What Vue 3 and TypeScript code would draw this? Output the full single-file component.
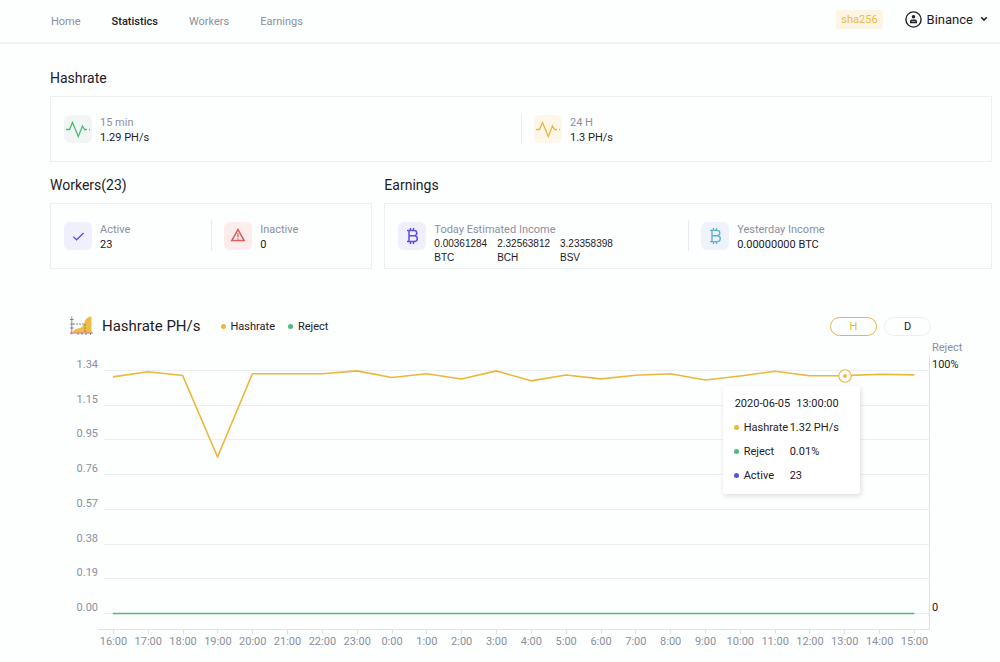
<script setup lang="ts">
import { computed, ref } from 'vue'

const navItems = ['Home', 'Statistics', 'Workers', 'Earnings']
const active = 'Statistics'
const range = ref<'H' | 'D'>('H')
const ranges = ['H', 'D'] as const

const income = [
  { value: '0.00361284', coin: 'BTC' },
  { value: '2.32563812', coin: 'BCH' },
  { value: '3.23358398', coin: 'BSV' },
]

const yLabels = ['1.34', '1.15', '0.95', '0.76', '0.57', '0.38', '0.19', '0.00']
const xLabels = Array.from({ length: 24 }, (_, i) => `${(i + 16) % 24}:00`)
const series = [
  1.305, 1.333, 1.312, 0.863, 1.322, 1.322, 1.322, 1.338, 1.301, 1.322, 1.293, 1.338,
  1.283, 1.315, 1.294, 1.314, 1.322, 1.288, 1.31, 1.336, 1.311, 1.312, 1.319, 1.316,
]

const W = 831
const H = 275
const TOP = 15
const BASE = 258
const px = (i: number) => 15 + i * 34.8
const py = (v: number) => BASE + 0.5 - (v / 1.34) * (BASE - TOP)

const gridLines = yLabels.map((_, i) => Math.round(TOP + (i * (BASE - TOP)) / 7))
const points = computed(() => series.map((v, i) => `${px(i)},${py(v)}`).join(' '))

const selected = ref(21)
const anchor = computed(() => ({
  left: `${(px(selected.value) / W) * 100}%`,
  top: `${(py(series[selected.value]) / H) * 100}%`,
}))
const details = [
  { name: 'Hashrate', value: '1.32 PH/s', tone: 'gold' },
  { name: 'Reject', value: '0.01%', tone: 'green' },
  { name: 'Active', value: '23', tone: 'violet' },
]
</script>

<template>
  <div class="page">
    <header class="topbar">
      <nav class="nav">
        <a v-for="n in navItems" :key="n" href="#" :class="{ current: n === active }">{{ n }}</a>
      </nav>
      <span class="algo">sha256</span>
      <button type="button" class="account">
        <svg width="17" height="17" viewBox="0 0 17 17" aria-hidden="true">
          <circle cx="8.5" cy="8.5" r="7.6" fill="none" stroke="#1e2026" stroke-width="1.4" />
          <circle cx="8.5" cy="5.8" r="1.8" fill="#1e2026" />
          <path d="M5 12.2V10.4Q5 8.6 6.8 8.6H10.2Q12 8.6 12 10.4V12.2Z" fill="#1e2026" />
          <path d="M6.6 10.4H10.4" stroke="#fff" stroke-width=".6" />
        </svg>
        <span>Binance</span>
        <svg class="chev" width="8" height="6" viewBox="0 0 8 6" aria-hidden="true">
          <path d="M1.2 1.2L4 4L6.8 1.2" fill="none" stroke="#1e2026" stroke-width="1.6" />
        </svg>
      </button>
    </header>

    <main>
      <section>
        <h2>Hashrate</h2>
        <div class="card">
          <div class="cell">
            <span class="tile mint">
              <svg width="28" height="28" viewBox="0 0 28 28" aria-hidden="true">
                <path d="M2 14.5H5.5L8.5 7.5L14.3 21.5L18.5 11L20.5 14.5H23M25 14.5H26" fill="none" stroke="#4bbd7a" stroke-width="1.3" />
              </svg>
            </span>
            <div><div class="label">15 min</div><div class="value">1.29 PH/s</div></div>
          </div>
          <div class="cell">
            <span class="tile cream">
              <svg width="28" height="28" viewBox="0 0 28 28" aria-hidden="true">
                <path d="M2 14.5H5.5L8.5 7.5L14.3 21.5L18.5 11L20.5 14.5H23M25 14.5H26" fill="none" stroke="#eab83a" stroke-width="1.3" />
              </svg>
            </span>
            <div><div class="label">24 H</div><div class="value">1.3 PH/s</div></div>
          </div>
        </div>
      </section>

      <div class="pair">
        <section>
          <h2>Workers(23)</h2>
          <div class="card">
            <div class="cell">
              <span class="tile lilac">
                <svg width="28" height="28" viewBox="0 0 28 28" aria-hidden="true">
                  <path d="M9.2 14.6L12.6 17.8L19.6 11" fill="none" stroke="#5a50e6" stroke-width="1.3" />
                </svg>
              </span>
              <div><div class="label">Active</div><div class="value">23</div></div>
            </div>
            <div class="cell">
              <span class="tile rose">
                <svg width="28" height="28" viewBox="0 0 28 28" aria-hidden="true">
                  <path d="M14 7.6L20.2 18.6H7.8Z" fill="none" stroke="#d9605a" stroke-width="1.5" />
                  <path d="M14 11.3V15.2M14 16.2V17.5" stroke="#d9605a" stroke-width="1.3" />
                </svg>
              </span>
              <div><div class="label">Inactive</div><div class="value">0</div></div>
            </div>
          </div>
        </section>

        <section>
          <h2>Earnings</h2>
          <div class="card">
            <div class="cell">
              <span class="tile lilac">
                <svg width="28" height="28" viewBox="0 0 28 28" fill="none" stroke="#5a50e6" stroke-width="1.5" aria-hidden="true">
                  <path d="M9 8.4H16.2Q18.8 8.4 18.8 11Q18.8 13.7 16.2 13.7H11M16.2 13.7Q19.3 13.7 19.3 16.6Q19.3 19.6 16.2 19.6H9M11 8.4V19.6M12.5 6V8.4M15.5 6V8.4M12.5 19.6V22M15.5 19.6V22" />
                </svg>
              </span>
              <div>
                <div class="label">Today Estimated Income</div>
                <div class="coins">
                  <div v-for="c in income" :key="c.coin">
                    <div>{{ c.value }}</div>
                    <div>{{ c.coin }}</div>
                  </div>
                </div>
              </div>
            </div>
            <div class="cell">
              <span class="tile haze">
                <svg width="28" height="28" viewBox="0 0 28 28" fill="none" stroke="#5fb4cc" stroke-width="1.4" aria-hidden="true">
                  <path d="M9 8.4H16.2Q18.8 8.4 18.8 11Q18.8 13.7 16.2 13.7H11M16.2 13.7Q19.3 13.7 19.3 16.6Q19.3 19.6 16.2 19.6H9M11 8.4V19.6M12.5 6V8.4M15.5 6V8.4M12.5 19.6V22M15.5 19.6V22" />
                </svg>
              </span>
              <div><div class="label">Yesterday Income</div><div class="value">0.00000000 BTC</div></div>
            </div>
          </div>
        </section>
      </div>

      <section class="chart">
        <div class="chart-head">
          <svg width="23" height="20" viewBox="0 0 23 20" aria-hidden="true">
            <path d="M2.5 16.5Q5 12.8 8 12.6Q12.5 12 14 8Q15.5 1 21.5 .6V16.5Z" fill="#eebc40" />
            <path d="M1.8 .5V18.5M0 3.5H3.6M0 8H3.6M0 12H3.6" fill="none" stroke="#6b6f7c" stroke-width=".8" />
            <path d="M3 8H15V16" fill="none" stroke="#6b6f7c" stroke-width=".8" stroke-dasharray="2 1" />
            <path d="M0 17H23" stroke="#d46b52" stroke-width="1" />
            <path d="M8 16.5V19M12 16.5V19M16 16.5V19M20.5 16.5V19" stroke="#6b6f7c" stroke-width=".8" />
          </svg>
          <h1>Hashrate PH/s</h1>
          <span class="key"><i class="dot gold"></i>Hashrate</span>
          <span class="key"><i class="dot green"></i>Reject</span>
          <div class="ranges">
            <button v-for="r in ranges" :key="r" type="button" :class="{ on: range === r }" @click="range = r">{{ r }}</button>
          </div>
        </div>

        <div class="plot-grid">
          <div class="axis-title">Reject</div>
          <div class="y-axis"><span v-for="y in yLabels" :key="y">{{ y }}</span></div>
          <div class="plot">
            <svg :viewBox="`0 0 ${W} ${H}`" preserveAspectRatio="none" role="img" aria-label="Hashrate and reject over 24 hours">
              <g fill="#eceff1">
                <rect v-for="g in gridLines" :key="g" x="6" :y="g" width="825" height="1" />
              </g>
              <g fill="#dfe3e5">
                <rect x="0" y="274" width="831" height="1" />
                <rect x="830" y="0" width="1" height="275" />
              </g>
              <polyline :points="`${px(0)},${BASE + 0.5} ${px(23)},${BASE + 0.5}`" fill="none" stroke="#4bbd7a" stroke-width="1.6" />
              <polyline :points="points" fill="none" stroke="#eab83a" stroke-width="1.6" stroke-linejoin="round" />
            </svg>
            <div class="anchor" :style="anchor">
              <svg class="marker" width="14" height="14" viewBox="0 0 14 14" aria-hidden="true">
                <circle cx="7" cy="7" r="6.2" fill="#fff" stroke="#eab83a" stroke-width="1.1" />
                <circle cx="7" cy="7" r="1.9" fill="#eab83a" />
              </svg>
              <div class="tip">
                <div class="when"><span>2020-06-05</span><span>13:00:00</span></div>
                <div v-for="d in details" :key="d.name" class="detail">
                  <i class="dot" :class="d.tone"></i>
                  <span class="name">{{ d.name }}</span>
                  <span>{{ d.value }}</span>
                </div>
              </div>
            </div>
          </div>
          <div class="r-axis"><span>100%</span><span>0</span></div>
          <div class="x-axis"><span v-for="x in xLabels" :key="x">{{ x }}</span></div>
        </div>
      </section>
    </main>
  </div>
</template>

<style>
body { margin: 0; background: #fdfefe; }
</style>

<style scoped>
.page {
  font-family: Roboto, "Liberation Sans", sans-serif;
  font-size: 11px;
  line-height: 15px;
  color: #1e2026;
  background: #fdfefe;
}
h1, h2 { margin: 0; font-weight: 400; }
button { font: inherit; color: inherit; background: none; cursor: pointer; }

.topbar {
  display: flex;
  align-items: center;
  height: 42px;
  padding: 0 12px 0 51px;
  border-bottom: 2px solid #eff2f3;
}
.nav { display: flex; gap: 31px; flex: 1; padding-top: 1px; }
.nav a { color: #8b909e; text-decoration: none; }
.nav .current { color: #1e2026; font-weight: 500; }
.algo {
  padding: 2px 5px;
  margin: 0 22px 4px 0;
  border-radius: 2px;
  background: #fdf5e4;
  color: #ecba45;
}
.account {
  display: flex;
  align-items: center;
  gap: 5px;
  padding: 0;
  margin-bottom: 4px;
  border: 0;
  font-size: 13px;
}
.chev { margin-left: 2px; }

main { padding: 24px 8px 0 50px; }
h2 { font-size: 14px; line-height: 20px; margin-bottom: 8px; }
.card {
  display: grid;
  grid-template-columns: 1fr 1fr;
  box-sizing: border-box;
  height: 66px;
  border: 1px solid #edf0f2;
}
.cell { display: flex; gap: 8px; padding: 18px 0 0 13px; position: relative; }
.cell + .cell::before {
  content: "";
  position: absolute;
  left: 0;
  top: 16px;
  height: 31px;
  border-left: 1px solid #e8ebed;
}
.tile { flex: none; width: 28px; height: 28px; border-radius: 6px; }
.tile svg { display: block; }
.mint { background: #f1f5f4; }
.cream { background: #fdf7ea; }
.lilac { background: #efeffd; }
.rose { background: #fcecec; }
.haze { background: #eff2fb; }
.label { color: #8b909e; white-space: nowrap; }
.value { white-space: nowrap; }
.coins {
  display: flex;
  gap: 10px;
  font-family: "Liberation Sans", Arial, sans-serif;
  font-size: 10px;
  line-height: 14px;
}
.pair { display: grid; grid-template-columns: 322fr 607fr; gap: 12px; margin-top: 13px; }

.chart { margin-top: 46px; }
.chart-head { display: flex; align-items: center; height: 22px; padding: 0 61px 0 20px; }
h1 { font-size: 15px; line-height: 22px; margin: 0 20px 0 9px; }
.key { display: flex; align-items: center; gap: 5px; margin-right: 13px; }
.dot { width: 5px; height: 5px; border-radius: 50%; flex: none; }
.gold { background: #eab83a; }
.green { background: #4bbd7a; }
.violet { background: #5a50e6; }
.ranges { display: flex; gap: 7px; margin-left: auto; }
.ranges button {
  width: 47px;
  height: 19px;
  padding: 0;
  border: 1px solid #eceff1;
  border-radius: 10px;
  line-height: 17px;
}
.ranges .on { border-color: #eab83a; color: #eab83a; }

.plot-grid {
  display: grid;
  grid-template-columns: 48px minmax(0, 1fr) 62px;
  margin-top: 4px;
}
.axis-title { grid-column: 3; padding-left: 2px; color: #8b909e; line-height: 14px; }
.y-axis, .r-axis {
  display: flex;
  flex-direction: column;
  justify-content: space-between;
  line-height: 14px;
  padding: 3px 0 15px;
}
.y-axis { grid-column: 1; text-align: right; color: #8b909e; }
.r-axis { padding-left: 2px; }
.plot { position: relative; height: 275px; }
.plot > svg { display: block; width: 100%; height: 100%; }
.anchor { position: absolute; width: 0; height: 0; }
.marker { position: absolute; left: -7px; top: -7px; }
.tip {
  position: absolute;
  left: -122px;
  top: 10px;
  box-sizing: border-box;
  width: 137px;
  padding: 10px 0 11px 11px;
  border-radius: 3px;
  background: #fff;
  box-shadow: 1px 2px 5px rgba(40, 50, 60, 0.16);
  white-space: nowrap;
}
.when { display: flex; gap: 6px; padding-left: 1px; }
.detail { display: flex; align-items: center; gap: 5px; margin-top: 9px; }
.detail .name { width: 41px; }
.x-axis {
  grid-column: 2;
  display: flex;
  margin: 0 -2px;
  color: #8b909e;
}
.x-axis span {
  flex: 1 1 0;
  min-width: 0;
  display: flex;
  flex-direction: column;
  align-items: center;
}
.x-axis span::before { content: ""; height: 4px; border-left: 1px solid #dfe3e5; }
</style>
